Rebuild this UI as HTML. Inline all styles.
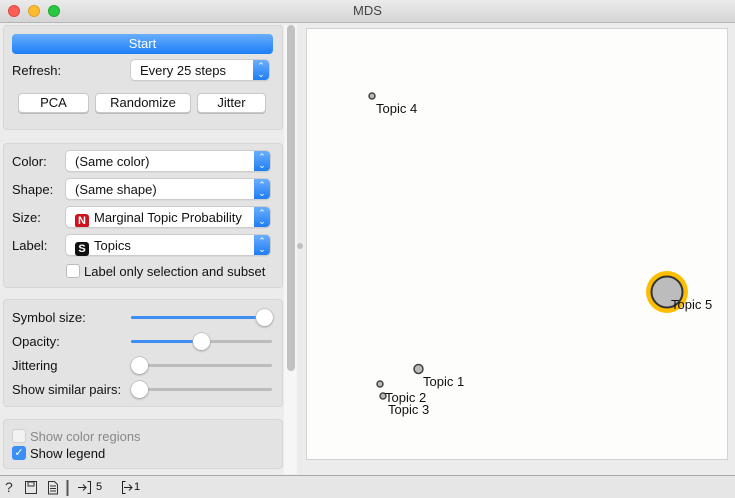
<!DOCTYPE html>
<html><head><meta charset="utf-8"><style>
*{box-sizing:border-box;margin:0;padding:0}
body{width:735px;height:498px;overflow:hidden;background:#ececec;font-family:"Liberation Sans",sans-serif;font-size:13px;color:#111;position:relative}
.a{position:absolute}
.title{left:0;top:0;width:735px;height:23px;background:linear-gradient(#ebebeb,#d5d5d5);border-bottom:1px solid #b5b5b5;text-align:center;line-height:22px;color:#444}
.dot{width:12px;height:12px;border-radius:50%;top:5px}
.box{background:#e3e3e3;border:1px solid #d6d6d6;border-radius:4px;left:3px;width:280px}
.btn{background:#fff;border:1px solid #c8c8c8;border-radius:4px;text-align:center;line-height:18px;height:20px;box-shadow:0 1px 0 #bbb}
.combo{background:#fff;border-radius:4px;height:20px;box-shadow:0 0 0 1px #ccc,0 1px 1px #aaa;line-height:21px;padding-left:9px}
.arr{position:absolute;right:0;top:0;width:16px;height:20px;background:linear-gradient(#6aaefc,#1f7ef5);border-radius:0 4px 4px 0;color:#fff;font-size:9px;text-align:center;line-height:8px;padding-top:2px}
.track{height:3px;background:#bcbcbc;border-radius:2px;left:131px;width:141px}
.knob{width:17px;height:17px;border-radius:50%;background:#fff;box-shadow:0 0 0 .5px #aaa,0 1px 2px #999}
.cb{width:14px;height:14px;border-radius:3px;background:#fff;border:1px solid #bbb}
.badge{display:inline-block;width:14px;height:14px;border-radius:3px;color:#fff;font-weight:bold;font-size:11px;line-height:14px;text-align:center;vertical-align:-2px;margin-right:5px}
</style></head><body>
<div class="a title">MDS</div>
<div class="a dot" style="left:8px;background:#fc5f57;border:1px solid #de4841"></div>
<div class="a dot" style="left:28px;background:#fdbc2e;border:1px solid #dea123"></div>
<div class="a dot" style="left:48px;background:#28c840;border:1px solid #1ea933"></div>

<div class="a box" style="top:25px;height:105px"></div>
<div class="a" style="left:12px;top:34px;width:261px;height:20px;border-radius:4px;background:linear-gradient(#68aefd,#1c7ef6);color:#fff;text-align:center;line-height:20px">Start</div>
<div class="a" style="left:12px;top:63px">Refresh:</div>
<div class="a combo" style="left:131px;top:60px;width:138px">Every 25 steps<div class="arr">⌃<br>⌄</div></div>
<div class="a btn" style="left:18px;top:93px;width:71px">PCA</div>
<div class="a btn" style="left:95px;top:93px;width:96px">Randomize</div>
<div class="a btn" style="left:197px;top:93px;width:69px">Jitter</div>

<div class="a box" style="top:143px;height:145px"></div>
<div class="a" style="left:12px;top:154px">Color:</div>
<div class="a combo" style="left:66px;top:151px;width:204px">(Same color)<div class="arr">⌃<br>⌄</div></div>
<div class="a" style="left:12px;top:182px">Shape:</div>
<div class="a combo" style="left:66px;top:179px;width:204px">(Same shape)<div class="arr">⌃<br>⌄</div></div>
<div class="a" style="left:12px;top:210px">Size:</div>
<div class="a combo" style="left:66px;top:207px;width:204px;padding-left:9px;white-space:nowrap;overflow:hidden"><span class="badge" style="background:#d0121f">N</span>Marginal Topic Probability<div class="arr">⌃<br>⌄</div></div>
<div class="a" style="left:12px;top:238px">Label:</div>
<div class="a combo" style="left:66px;top:235px;width:204px"><span class="badge" style="background:#111">S</span>Topics<div class="arr">⌃<br>⌄</div></div>
<div class="a cb" style="left:66px;top:264px"></div>
<div class="a" style="left:84px;top:264px">Label only selection and subset</div>

<div class="a box" style="top:299px;height:108px"></div>
<div class="a" style="left:12px;top:310px">Symbol size:</div>
<div class="a track" style="top:316px;background:#3c8ef3"></div>
<div class="a knob" style="left:256px;top:309px"></div>
<div class="a" style="left:12px;top:334px">Opacity:</div>
<div class="a track" style="top:340px;background:linear-gradient(90deg,#3c8ef3 50%,#bcbcbc 50%)"></div>
<div class="a knob" style="left:193px;top:333px"></div>
<div class="a" style="left:12px;top:358px">Jittering</div>
<div class="a track" style="top:364px"></div>
<div class="a knob" style="left:131px;top:357px"></div>
<div class="a" style="left:12px;top:382px">Show similar pairs:</div>
<div class="a track" style="top:388px"></div>
<div class="a knob" style="left:131px;top:381px"></div>

<div class="a box" style="top:419px;height:50px"></div>
<div class="a cb" style="left:12px;top:429px;border-color:#d0d0d0;background:#f2f2f2"></div>
<div class="a" style="left:30px;top:429px;color:#888">Show color regions</div>
<div class="a cb" style="left:12px;top:446px;background:#3a8ef5;border-color:#3a8ef5;color:#fff;font-size:11px;line-height:12px;text-align:center">✓</div>
<div class="a" style="left:30px;top:446px">Show legend</div>

<div class="a" style="left:284px;top:25px;width:13px;height:449px;background:#f6f6f6"></div>
<div class="a" style="left:287px;top:25px;width:8px;height:346px;background:#c1c1c1;border-radius:4px"></div>
<div class="a" style="left:297px;top:243px;width:6px;height:6px;border-radius:50%;background:#c0c0c0"></div>

<div class="a" style="left:306px;top:28px;width:422px;height:432px;background:#fdfdfc;border:1px solid #d3d3d3"></div>
<svg class="a" style="left:0;top:0" width="735" height="498">
<g stroke="#444" stroke-width="1.5" fill="#bbb">
<circle cx="372" cy="96" r="3"/><circle cx="418.5" cy="369" r="4.5"/><circle cx="380" cy="384" r="3"/><circle cx="383" cy="396" r="3"/>
</g>
<circle cx="667" cy="292" r="21" fill="#fdbd00"/>
<circle cx="667" cy="292" r="15.5" fill="#bbbcbb" stroke="#333" stroke-width="2"/>
<g font-family="Liberation Sans" font-size="13" fill="#111">
<text x="376" y="113">Topic 4</text><text x="423" y="386">Topic 1</text><text x="385" y="402">Topic 2</text><text x="388" y="414">Topic 3</text><text x="671" y="309">Topic 5</text>
</g>
</svg>

<div class="a" style="left:0;top:475px;width:735px;height:23px;background:#e6e6e6;border-top:1px solid #a8a8a8"></div>
<div class="a" style="left:5px;top:479px;font-size:14px;color:#333">?</div>
<svg class="a" style="left:24px;top:480px" width="60" height="16"><rect x="1.5" y="1.5" width="11" height="12" fill="none" stroke="#333"/><rect x="4" y="2" width="6" height="4" fill="none" stroke="#333"/><path d="M24.5 1.5h6l3 3v9.5h-9z M26 6h6 M26 8.5h6 M26 11h6" fill="none" stroke="#333"/><path d="M43.5 0v16" stroke="#555" stroke-width="2"/></svg>
<svg class="a" style="left:77px;top:480px" width="70" height="16"><path d="M1 7.5h8 M6 4.5l3 3-3 3 M10.5 1.5h3v12h-3" fill="none" stroke="#222"/><path d="M48.5 1.5h-3v12h3 M47 7.5h8 M52 4.5l3 3-3 3" fill="none" stroke="#222"/></svg>
<div class="a" style="left:96px;top:481px;font-size:11px">5</div>
<div class="a" style="left:134px;top:481px;font-size:11px">1</div>
</body></html>
